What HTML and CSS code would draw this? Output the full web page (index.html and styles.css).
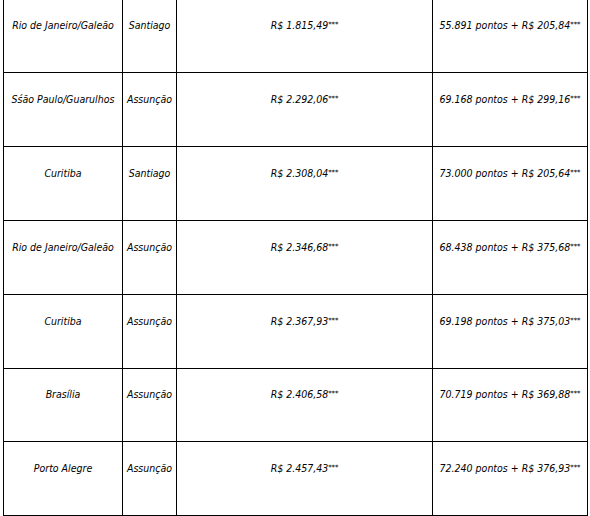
FILE: index.html
```html
<!DOCTYPE html>
<html lang="pt">
<head>
<meta charset="utf-8">
<link rel="stylesheet" href="styles.css">
</head>
<body>
<div class="wrap">
<table class="fares">
<tbody>
<tr><td class="c1">Rio de Janeiro/Galeão</td><td class="c2">Santiago</td><td class="c3">R$ 1.815,49<sup>***</sup></td><td class="c4">55.891 pontos + R$ 205,84<sup>***</sup></td></tr>
<tr><td class="c1">Sśão Paulo/Guarulhos</td><td class="c2">Assunção</td><td class="c3">R$ 2.292,06<sup>***</sup></td><td class="c4">69.168 pontos + R$ 299,16<sup>***</sup></td></tr>
<tr><td class="c1">Curitiba</td><td class="c2">Santiago</td><td class="c3">R$ 2.308,04<sup>***</sup></td><td class="c4">73.000 pontos + R$ 205,64<sup>***</sup></td></tr>
<tr><td class="c1">Rio de Janeiro/Galeão</td><td class="c2">Assunção</td><td class="c3">R$ 2.346,68<sup>***</sup></td><td class="c4">68.438 pontos + R$ 375,68<sup>***</sup></td></tr>
<tr><td class="c1">Curitiba</td><td class="c2">Assunção</td><td class="c3">R$ 2.367,93<sup>***</sup></td><td class="c4">69.198 pontos + R$ 375,03<sup>***</sup></td></tr>
<tr class="short"><td class="c1">Brasília</td><td class="c2">Assunção</td><td class="c3">R$ 2.406,58<sup>***</sup></td><td class="c4">70.719 pontos + R$ 369,88<sup>***</sup></td></tr>
<tr><td class="c1">Porto Alegre</td><td class="c2">Assunção</td><td class="c3">R$ 2.457,43<sup>***</sup></td><td class="c4">72.240 pontos + R$ 376,93<sup>***</sup></td></tr>
</tbody>
</table>
</div>
</body>
</html>
```
FILE: styles.css
```css
html, body {
  margin: 0;
  padding: 0;
  background: #ffffff;
}
.wrap {
  padding: 0 0 0 3px;
  margin-top: -2px;
}
.fares {
  border-collapse: collapse;
  table-layout: fixed;
  width: 585px;
  font-family: "DejaVu Sans Condensed", "DejaVu Sans", sans-serif;
  font-stretch: condensed;
  font-style: italic;
  font-size: 10.5px;
  color: #000000;
}
.fares td {
  border: 1px solid #000000;
  height: 74px;
  padding: 0 0 22px 0;
  text-align: center;
  vertical-align: middle;
  white-space: nowrap;
  box-sizing: border-box;
}
.fares .short td {
  height: 73px;
}
.c1 { width: 119px; }
.c2 { width: 54px; }
.c3 { width: 256px; }
.c4 { width: 155px; }
.fares sup {
  font-size: 7.5px;
  vertical-align: 2px;
  line-height: 0;
}
```
